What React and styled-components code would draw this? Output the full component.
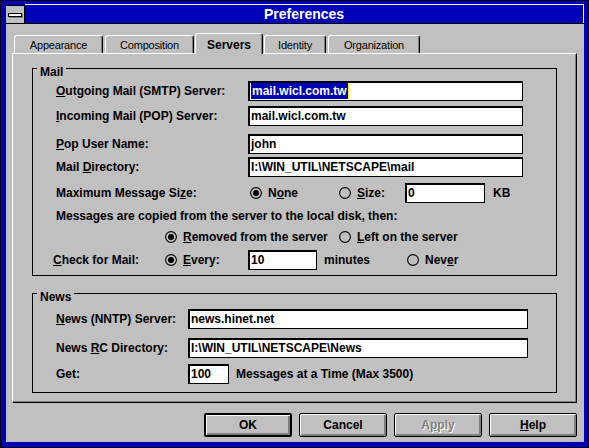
import React from "react";
import styled, { createGlobalStyle } from "styled-components";

const BLUE = "#0000b8";
const FACE = "#c0c0c0";

const GlobalStyle = createGlobalStyle`
  html, body {
    margin: 0;
    padding: 0;
    background: #ffffff;
  }
  body {
    font-family: "Liberation Sans", Arial, sans-serif;
    color: #000;
  }
  * {
    box-sizing: border-box;
  }
`;

const Frame = styled.div`
  width: 589px;
  height: 448px;
  border: 1px solid #000;
  background: ${BLUE};
  padding: 3px 4px 5px 4px;
  display: flex;
`;

const Inner = styled.div`
  flex: 1;
  display: flex;
  flex-direction: column;
  border-left: 1px solid #000;
`;

const TitleBar = styled.div`
  height: 20px;
  flex: none;
  display: flex;
  background: ${BLUE};
  border-bottom: 1px solid #000;
`;

const SysMenu = styled.div`
  width: 19px;
  margin-top: 1px;
  background: ${FACE};
  border-right: 1px solid #000;
  box-shadow: inset 0 1px 0 #000;
  display: flex;
  align-items: center;
  justify-content: center;
  padding-top: 1px;
`;

const SysBar = styled.span`
  width: 14px;
  height: 4px;
  background: #fff;
  border: 1px solid #000;
  box-shadow: 1px 1px 0 #808080;
`;

const Caption = styled.div`
  flex: 1;
  border-top: 1px solid #fff;
  border-right: 1px solid #fff;
  color: #fff;
  font-size: 14px;
  font-weight: 700;
  display: flex;
  align-items: center;
  justify-content: center;
`;

const Body = styled.div`
  flex: 1;
  background: ${FACE};
  padding: 9px 7px 0 6px;
  display: flex;
  flex-direction: column;
`;

const TabRow = styled.div`
  height: 20px;
  flex: none;
  display: flex;
  align-items: flex-end;
  gap: 2px;
  padding-left: 2px;
  position: relative;
  z-index: 1;
`;

const Tab = styled.div`
  width: ${(p) => p.$w}px;
  height: ${(p) => (p.$active ? 21 : 18)}px;
  margin: ${(p) => (p.$active ? "0 -1px -1px" : "0")};
  padding-top: ${(p) => (p.$active ? 2 : 0)}px;
  background: ${FACE};
  border-top: 1px solid #fff;
  border-left: 1px solid #fff;
  border-right: 1px solid #000;
  border-radius: 3px 3px 0 0;
  box-shadow: inset -1px 0 0 #808080;
  display: flex;
  align-items: center;
  justify-content: center;
  font-size: ${(p) => (p.$active ? 12 : 11)}px;
  font-weight: ${(p) => (p.$active ? 700 : 400)};
  letter-spacing: ${(p) => (p.$active ? 0 : -0.2)}px;
`;

const Panel = styled.div`
  height: 350px;
  flex: none;
  border: 1px solid;
  border-color: #fff #000 #000 #fff;
  box-shadow: inset -1px -1px 0 #808080;
  padding: 14px 19px 0 19px;
  display: flex;
  flex-direction: column;
`;

const GroupBox = styled.div`
  position: relative;
  border: 1px solid #000;
  margin-top: ${(p) => p.$mt || 0}px;
  padding: 0 0 ${(p) => p.$pb}px 23px;
`;

const GroupTitle = styled.span`
  position: absolute;
  top: -4px;
  left: 4px;
  padding: 0 3px;
  background: ${FACE};
  font-size: 12px;
  font-weight: 700;
  line-height: 14px;
`;

const Row = styled.div`
  display: flex;
  align-items: center;
  height: ${(p) => p.$h || 20}px;
  margin-top: ${(p) => p.$mt}px;
  margin-left: ${(p) => p.$ml || 0}px;
  font-size: 12px;
  font-weight: 700;
  white-space: nowrap;
`;

const Label = styled.div`
  width: ${(p) => p.$w}px;
  flex: none;
`;

const Text = styled.div`
  flex: none;
  width: ${(p) => (p.$w ? `${p.$w}px` : "auto")};
  margin-left: ${(p) => p.$ml || 0}px;
`;

const Field = styled.div`
  width: ${(p) => p.$w}px;
  height: ${(p) => p.$h || 20}px;
  flex: none;
  background: #fff;
  border: 1px solid #000;
  box-shadow: inset 1px 1px 0 #000;
  padding-left: 2px;
  display: flex;
  align-items: center;
  font-size: 12px;
  font-weight: 700;
`;

const Selection = styled.span`
  height: 16px;
  line-height: 16px;
  padding: 0 1px 0 1px;
  background: ${BLUE};
  color: #fff;
  border-right: 1px solid #ffff00;
`;

const Choice = styled.div`
  width: ${(p) => (p.$w ? `${p.$w}px` : "auto")};
  flex: none;
  display: flex;
  align-items: center;
  gap: 6px;
`;

const Key = styled.span`
  text-decoration: underline;
  text-underline-offset: 1px;
`;

const ButtonRow = styled.div`
  margin-top: 10px;
  display: flex;
  justify-content: flex-end;
  gap: 7px;
`;

const Button = styled.div`
  width: 88px;
  height: 24px;
  background: ${FACE};
  border: ${(p) => (p.$default ? 2 : 1)}px solid #000;
  border-radius: 2px;
  box-shadow: inset 1px 1px 0 #fff, inset -2px -2px 0 #808080;
  display: flex;
  align-items: center;
  justify-content: center;
  font-size: 12px;
  font-weight: 700;
  color: ${(p) => (p.$disabled ? "#808080" : "#000")};
  text-shadow: ${(p) => (p.$disabled ? "1px 1px 0 #fff" : "none")};
`;

const Radio = ({ checked }) => (
  <svg width="12" height="12" viewBox="0 0 12 12" style={{ flex: "none" }}>
    <circle cx="6" cy="6" r="5.4" fill={FACE} stroke="#000" strokeWidth="1.1" />
    {checked && <circle cx="6" cy="6" r="3" fill="#000" />}
  </svg>
);

const Option = ({ w, checked, children }) => (
  <Choice $w={w}>
    <Radio checked={checked} />
    <span>{children}</span>
  </Choice>
);

const App = () => {
  return (
    <>
      <GlobalStyle />
      <Frame>
        <Inner>
          <TitleBar>
            <SysMenu>
              <SysBar />
            </SysMenu>
            <Caption>Preferences</Caption>
          </TitleBar>
          <Body>
            <TabRow>
              <Tab $w={89}>Appearance</Tab>
              <Tab $w={89}>Composition</Tab>
              <Tab $w={68} $active>
                Servers
              </Tab>
              <Tab $w={62}>Identity</Tab>
              <Tab $w={92}>Organization</Tab>
            </TabRow>
            <Panel>
              <GroupBox $pb={5}>
                <GroupTitle>Mail</GroupTitle>
                <Row $mt={12}>
                  <Label $w={192}>
                    <Key>O</Key>utgoing Mail (SMTP) Server:
                  </Label>
                  <Field $w={275}>
                    <Selection>mail.wicl.com.tw</Selection>
                  </Field>
                </Row>
                <Row $mt={5}>
                  <Label $w={192}>
                    <Key>I</Key>ncoming Mail (POP) Server:
                  </Label>
                  <Field $w={275}>mail.wicl.com.tw</Field>
                </Row>
                <Row $mt={8}>
                  <Label $w={192}>
                    <Key>P</Key>op User Name:
                  </Label>
                  <Field $w={275}>john</Field>
                </Row>
                <Row $mt={3}>
                  <Label $w={192}>
                    Mail <Key>D</Key>irectory:
                  </Label>
                  <Field $w={275}>{"I:\\WIN_UTIL\\NETSCAPE\\mail"}</Field>
                </Row>
                <Row $mt={6}>
                  <Label $w={194}>
                    Maximum Message Si<Key>z</Key>e:
                  </Label>
                  <Option w={89} checked>
                    N<Key>o</Key>ne
                  </Option>
                  <Option w={66}>
                    <Key>S</Key>ize:
                  </Option>
                  <Field $w={80}>0</Field>
                  <Text $ml={8}>KB</Text>
                </Row>
                <Row $mt={5} $h={16}>
                  <Text>Messages are copied from the server to the local disk, then:</Text>
                </Row>
                <Row $mt={5} $h={16} $ml={109}>
                  <Option w={174} checked>
                    <Key>R</Key>emoved from the server
                  </Option>
                  <Option>
                    <Key>L</Key>eft on the server
                  </Option>
                </Row>
                <Row $mt={5} $ml={-3}>
                  <Label $w={112}>
                    <Key>C</Key>heck for Mail:
                  </Label>
                  <Option w={83} checked>
                    <Key>E</Key>very:
                  </Option>
                  <Field $w={69}>10</Field>
                  <Text $ml={7} $w={83}>
                    minutes
                  </Text>
                  <Option>
                    Nev<Key>e</Key>r
                  </Option>
                </Row>
              </GroupBox>

              <GroupBox $mt={17} $pb={8}>
                <GroupTitle>News</GroupTitle>
                <Row $mt={15}>
                  <Label $w={132}>
                    <Key>N</Key>ews (NNTP) Server:
                  </Label>
                  <Field $w={340}>news.hinet.net</Field>
                </Row>
                <Row $mt={9}>
                  <Label $w={132}>
                    News <Key>R</Key>C Directory:
                  </Label>
                  <Field $w={340}>{"I:\\WIN_UTIL\\NETSCAPE\\News"}</Field>
                </Row>
                <Row $mt={6}>
                  <Label $w={132}>Get:</Label>
                  <Field $w={41}>100</Field>
                  <Text $ml={7}>Messages at a Time (Max 3500)</Text>
                </Row>
              </GroupBox>
            </Panel>
            <ButtonRow>
              <Button $default>OK</Button>
              <Button>Cancel</Button>
              <Button $disabled>
                A<Key>p</Key>ply
              </Button>
              <Button>
                <Key>H</Key>elp
              </Button>
            </ButtonRow>
          </Body>
        </Inner>
      </Frame>
    </>
  );
};

export default App;
